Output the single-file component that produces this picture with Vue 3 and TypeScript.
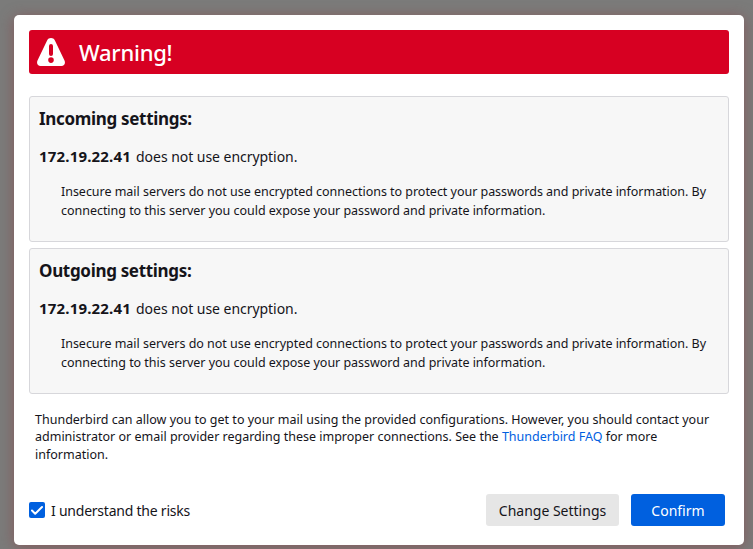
<script setup lang="ts">
import { ref } from 'vue'

interface ServerWarning {
  title: string
  host: string
}

const servers: ServerWarning[] = [
  { title: 'Incoming settings:', host: '172.19.22.41' },
  { title: 'Outgoing settings:', host: '172.19.22.41' },
]

const acknowledged = ref(true)
</script>

<template>
  <div class="backdrop">
    <main class="dialog">
      <header class="banner">
        <svg class="banner-icon" width="28" height="28" viewBox="0 0 28 28" aria-hidden="true">
          <path
            fill="#fff"
            fill-rule="evenodd"
            d="M14 0c-1.700 0-3 .8-3.900 2.400L.5 22.500C-.8 25.300.9 28 3.500 28h21c2.600 0 4.300-2.700 3-5.500L17.900 2.400C17 .8 15.700 0 14 0zM14 6a2 2 0 0 1 2 2v8a2 2 0 0 1-4 0V8a2 2 0 0 1 2-2zM14 19.300a2.800 2.800 0 1 1 0 5.600a2.800 2.800 0 0 1 0-5.600z"
          />
        </svg>
        <h1 class="banner-title">Warning!</h1>
      </header>

      <section v-for="server in servers" :key="server.title" class="server">
        <h2 class="server-title">{{ server.title }}</h2>
        <p class="server-status">
          <b class="host">{{ server.host }}</b>
          <span class="status">does not use encryption.</span>
        </p>
        <p class="server-detail">
          Insecure mail servers do not use encrypted connections to protect your passwords and private information. By<br />
          connecting to this server you could expose your password and private information.
        </p>
      </section>

      <p class="advice">
        Thunderbird can allow you to get to your mail using the provided configurations. However, you should contact your<br />
        administrator or email provider regarding these improper connections. See the
        <a class="link">Thunderbird FAQ</a> for more<br />
        information.
      </p>

      <footer class="actions">
        <label class="ack">
          <input v-model="acknowledged" class="ack-input" type="checkbox" />
          <span class="box" :class="{ checked: acknowledged }">
            <svg v-if="acknowledged" width="16" height="16" viewBox="0 0 16 16" aria-hidden="true">
              <path d="M3 8.500l3.200 3.200L13 5" fill="none" stroke="#fff" stroke-width="2" stroke-linecap="round" stroke-linejoin="round" />
            </svg>
          </span>
          <span class="ack-text">I understand the risks</span>
        </label>
        <button class="button" type="button">Change Settings</button>
        <button class="button primary" type="button" :disabled="!acknowledged">Confirm</button>
      </footer>
    </main>
  </div>
</template>

<style>
body {
  background: #7b7b7a;
  overflow: hidden;
}
</style>

<style scoped>
.backdrop {
  box-sizing: border-box;
  width: 753px;
  height: 549px;
  padding: 15px 9px 4px 14px;
  overflow: hidden;
  background: #7b7b7a;
  color: #15141a;
  font-family: "Segoe UI", "Noto Sans", "Open Sans", sans-serif;
}
.dialog {
  box-sizing: border-box;
  display: flex;
  flex-direction: column;
  height: 530px;
  padding: 15px;
  border-radius: 5px;
  background: #fff;
  box-shadow: 0 2px 14px rgba(140, 65, 70, 0.6);
}
h1,
h2,
p {
  margin: 0;
  white-space: nowrap;
}
.banner {
  display: flex;
  align-items: center;
  gap: 14px;
  box-sizing: border-box;
  height: 44px;
  margin-bottom: 22px;
  padding: 0 8px;
  border-radius: 3px;
  background: #d70022;
}
.banner-title {
  color: #fff;
  font-size: 22px;
  font-weight: 500;
  letter-spacing: -0.25px;
  line-height: 30px;
}
.server {
  box-sizing: border-box;
  height: 146px;
  margin-bottom: 6px;
  padding: 9px;
  border: 1px solid #d7d7db;
  border-radius: 3px;
  background: #f7f7f7;
}
.server-title {
  font-size: 17px;
  font-weight: 700;
  letter-spacing: -0.32px;
  line-height: 26px;
}
.server-status {
  display: flex;
  align-items: baseline;
  gap: 5px;
  height: 22px;
  margin-top: 13px;
  line-height: 22px;
}
.host {
  font-size: 15px;
  letter-spacing: 0.18px;
}
.status {
  font-size: 14px;
  letter-spacing: -0.04px;
}
.server-detail {
  margin: 15px 0 0 22px;
  font-size: 12.500px;
  letter-spacing: -0.03px;
  line-height: 19px;
}
.advice {
  margin: 11px 0 0 6px;
  font-size: 12.500px;
  line-height: 17.400px;
}
.link {
  color: #0060df;
}
.actions {
  display: flex;
  align-items: center;
  gap: 12px;
  margin-top: auto;
  padding: 0 4px 4px 0;
}
.ack {
  display: flex;
  align-items: center;
  gap: 6px;
  margin-right: auto;
  font-size: 14px;
  letter-spacing: -0.23px;
}
.ack-input {
  position: absolute;
  opacity: 0;
}
.box {
  display: flex;
  width: 16px;
  height: 16px;
  border-radius: 2px;
  background: #e0e0e6;
}
.box.checked {
  background: #0060df;
}
.button {
  display: flex;
  align-items: center;
  justify-content: center;
  width: 133px;
  height: 32px;
  padding: 0;
  border: 0;
  border-radius: 3px;
  background: #e6e6e6;
  color: #15141a;
  font: inherit;
  font-size: 14px;
  white-space: nowrap;
}
.primary {
  width: 94px;
  background: #0060df;
  color: #fff;
}
</style>
